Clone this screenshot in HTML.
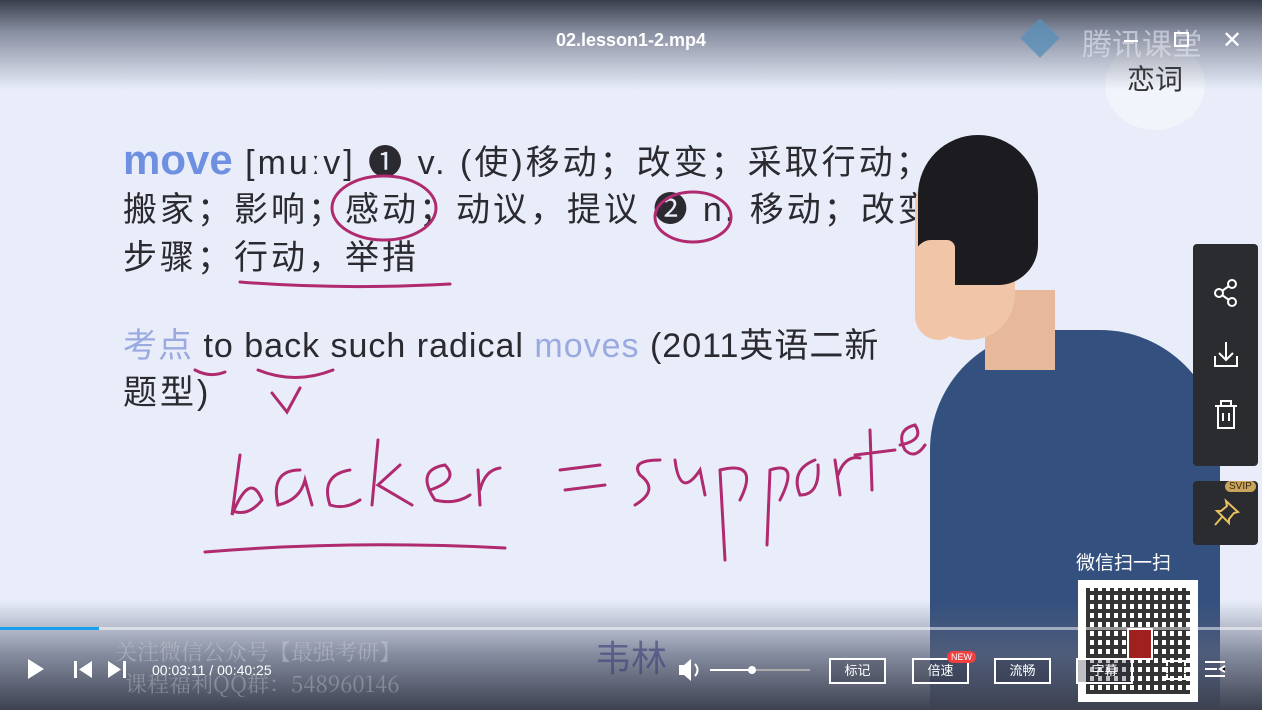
<!DOCTYPE html>
<html><head><meta charset="utf-8"><style>
body{margin:0;width:1262px;height:710px;overflow:hidden;position:relative;background:#e8edf9;font-family:"Liberation Sans","Noto Sans CJK SC",sans-serif}
.abs{position:absolute}
.top{left:0;top:0;width:1262px;height:90px;background:linear-gradient(#3a3f4c 0%,rgba(70,78,100,.6) 35%,rgba(200,210,235,0) 100%)}
.bot{left:0;top:600px;width:1262px;height:110px;background:linear-gradient(rgba(200,210,235,0),rgba(90,98,120,.7) 50%,#3d4150)}
.t{color:#2a2a30;font-size:34px;white-space:nowrap;line-height:40px;letter-spacing:3px}
.pink{stroke:#b02a70;fill:none;stroke-width:3;stroke-linecap:round}
.btn{top:658px;height:22px;border:2px solid #fff;color:#fff;font-size:13px;text-align:center;line-height:22px;width:53px;background:rgba(40,44,60,.3)}
</style></head><body>
<div class="abs t" style="left:123px;top:140px"><span style="color:#6f8fe0;font-weight:bold;font-size:42px;letter-spacing:0">move</span> [muːv] ❶ v. (使)移动；改变；采取行动；</div>
<div class="abs t" style="left:123px;top:190px">搬家；影响；感动；动议，提议 ❷ n. 移动；改变</div>
<div class="abs t" style="left:123px;top:238px">步骤；行动，举措</div>
<div class="abs t" style="left:123px;top:326px;letter-spacing:1px"><span style="color:#9aaae0">考点</span> to back such radical <span style="color:#9aaae0">moves</span> (2011英语二新</div>
<div class="abs t" style="left:123px;top:373px">题型)</div>
<svg class="abs" style="left:0;top:0" width="1262" height="710">
<ellipse class="pink" cx="384" cy="208" rx="52" ry="32"/>
<ellipse class="pink" cx="693" cy="217" rx="38" ry="25"/>
<path class="pink" d="M240 282 Q340 290 450 284"/>
<path class="pink" d="M195 370 Q210 378 225 372 M258 370 Q295 385 333 370 M272 393 L287 412 L300 388"/>
<path class="pink" d="M240 455 L232 515 Q250 470 262 500 Q250 515 236 512 M300 470 Q270 470 278 505 Q300 500 305 480 L312 505 M350 470 Q320 475 330 505 Q345 510 360 500 M378 440 L372 505 M400 465 L378 485 L412 505 M430 490 Q460 480 445 465 Q415 470 435 500 Q455 505 470 495 M478 470 L480 505 M480 490 Q485 470 500 468 M560 470 L600 465 M565 490 L605 485 M660 460 Q630 460 640 475 Q660 490 635 505 M675 460 Q680 500 700 470 L705 495 M720 470 L725 560 M720 470 Q760 460 740 500 M770 470 L767 545 M770 470 Q800 460 780 500 M815 460 Q790 470 800 495 Q820 495 818 465 M835 460 L840 495 M838 475 Q845 455 860 458 M870 430 L872 490 M855 455 L895 450 M900 445 Q925 440 915 425 Q895 430 905 450 Q915 460 925 445"/>
<path class="pink" d="M205 552 Q350 540 505 548"/>
</svg>
<!-- person -->
<div class="abs" style="left:930px;top:330px;width:290px;height:380px;background:#34507e;border-radius:120px 120px 0 0"></div>
<div class="abs" style="left:985px;top:290px;width:70px;height:80px;background:#e8b89a"></div>
<div class="abs" style="left:915px;top:160px;width:100px;height:180px;background:#f0c5a8;border-radius:50px 50px 50px 60px"></div>
<div class="abs" style="left:918px;top:135px;width:120px;height:150px;background:#1c1c20;border-radius:60px 60px 40px 30px"></div>
<div class="abs" style="left:915px;top:240px;width:40px;height:100px;background:#f0c5a8;border-radius:20px 10px 20px 30px"></div>
<div class="abs" style="left:1105px;top:40px;width:100px;height:90px;border-radius:50%;background:rgba(255,255,255,.4);color:#333;font-size:28px;text-align:center;line-height:80px">恋词</div>
<div class="abs top"></div>
<div class="abs bot"></div>
<div class="abs" style="left:0;top:30px;width:1262px;text-align:center;color:#fff;font-weight:bold;font-size:18px">02.lesson1-2.mp4</div>
<div class="abs" style="left:1020px;top:18px;width:40px;height:40px;background:#5a8fb8;transform:rotate(45deg) scale(.7);opacity:.8"></div>
<div class="abs" style="left:1082px;top:20px;color:rgba(230,230,240,.6);font-size:30px">腾讯课堂</div>
<div class="abs" style="left:1124px;top:40px;width:14px;height:2px;background:#fff"></div>
<div class="abs" style="left:1174px;top:32px;width:11px;height:11px;border:2px solid #fff"></div>
<div class="abs" style="left:1222px;top:26px;color:#fff;font-size:24px">✕</div>
<!-- side panel -->
<div class="abs" style="left:1193px;top:244px;width:65px;height:222px;background:#2b2c30;border-radius:4px"></div>
<svg class="abs" style="left:1193px;top:244px" width="65" height="300" fill="none" stroke="#fff" stroke-width="2">
<circle cx="39" cy="40" r="4"/><circle cx="26" cy="49" r="4"/><circle cx="39" cy="58" r="4"/><path d="M29 47 L36 42 M29 51 L36 56"/>
<path d="M33 98 V116 M26 109 L33 116 L40 109 M22 112 V122 H44 V112"/>
<path d="M22 162 H44 M28 162 V157 H38 V162 M25 162 V184 H41 V162 M30 169 V177 M36 169 V177"/>
</svg>
<div class="abs" style="left:1193px;top:481px;width:65px;height:64px;background:#2b2c30;border-radius:4px"></div>
<div class="abs" style="left:1225px;top:481px;background:#c9a45c;color:#3a2a10;font-size:10px;padding:0 4px;border-radius:6px">SVIP</div>
<svg class="abs" style="left:1212px;top:498px" width="30" height="30" fill="none" stroke="#e8c060" stroke-width="2"><path d="M14 3 L26 14 L22 15 L17 21 L17 25 L5 13 L9 13 L15 8Z M10 19 L3 27"/></svg>
<!-- qr -->
<div class="abs" style="left:1076px;top:548px;color:#fff;font-size:19px">微信扫一扫</div>
<div class="abs" style="left:1078px;top:580px;width:120px;height:122px;background:#fff"></div>
<div class="abs" style="left:1086px;top:588px;width:104px;height:106px;background:repeating-linear-gradient(90deg,#111 0 4px,transparent 4px 8px),repeating-linear-gradient(0deg,#111 0 4px,#fff 4px 9px);opacity:.85"></div>
<div class="abs" style="left:1127px;top:628px;width:22px;height:28px;background:#a02020;border:2px solid #fff"></div>
<!-- progress -->
<div class="abs" style="left:0;top:627px;width:1262px;height:3px;background:rgba(255,255,255,.5)"></div>
<div class="abs" style="left:0;top:627px;width:99px;height:3px;background:#1aa0f0"></div>
<div class="abs" style="left:115px;top:636px;color:rgba(200,200,210,.5);font-size:22px;font-family:'Noto Serif CJK SC',serif">关注微信公众号【最强考研】</div>
<div class="abs" style="left:125px;top:668px;color:rgba(200,200,210,.4);font-size:22px;font-family:'Noto Serif CJK SC',serif">课程福利QQ群：548960146</div>
<div class="abs" style="left:595px;top:630px;color:rgba(60,60,120,.6);font-size:36px">韦林</div>
<svg class="abs" style="left:0;top:650px" width="140" height="40" fill="#fff"><path d="M28 9 L44 19 L28 29Z"/><rect x="74" y="11" width="3" height="17"/><path d="M92 11 L79 19.5 L92 28Z"/><path d="M108 11 L121 19.5 L108 28Z"/><rect x="123" y="11" width="3" height="17"/></svg>
<div class="abs" style="left:152px;top:662px;color:#fff;font-size:14px">00:03:11 / 00:40:25</div>
<svg class="abs" style="left:676px;top:656px" width="140" height="28" fill="#fff"><path d="M3 9 H8 L15 3 V25 L8 19 H3Z"/><path d="M19 8 Q24 14 19 20" stroke="#fff" stroke-width="2" fill="none"/><rect x="34" y="13" width="42" height="2"/><rect x="76" y="13" width="58" height="2" fill="#aaa"/><circle cx="76" cy="14" r="4"/></svg>
<div class="abs btn" style="left:829px">标记</div>
<div class="abs btn" style="left:912px">倍速</div>
<div class="abs" style="left:947px;top:651px;background:#f04040;color:#fff;font-size:9px;padding:1px 4px;border-radius:7px">NEW</div>
<div class="abs btn" style="left:994px">流畅</div>
<div class="abs btn" style="left:1076px">字幕</div>
<div class="abs" style="left:1166px;top:660px;width:16px;height:16px;border:2px dashed #fff"></div>
<svg class="abs" style="left:1203px;top:659px" width="24" height="20" stroke="#fff" stroke-width="2"><path d="M2 3 H22 M2 10 H14 M2 17 H22 M22 7 L17 10 L22 13"/></svg>
</body></html>
